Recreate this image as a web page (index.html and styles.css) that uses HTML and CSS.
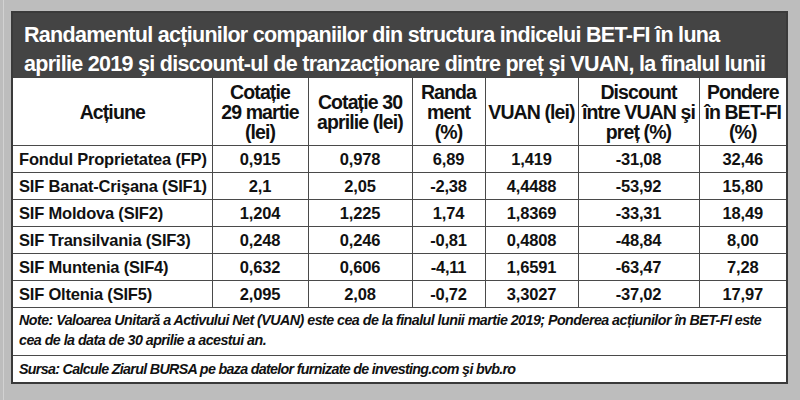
FILE: index.html
```html
<!DOCTYPE html>
<html lang="ro">
<head>
<meta charset="utf-8">
<link rel="stylesheet" href="styles.css">
</head>
<body>
<div class="frame">
  <div class="card">
    <div class="title">Randamentul acțiunilor companiilor din structura indicelui BET-FI în luna<br>aprilie 2019 şi discount-ul de tranzacționare dintre preț şi VUAN, la finalul lunii</div>
    <table class="data">
      <colgroup>
        <col class="c1"><col class="c2"><col class="c3"><col class="c4"><col class="c5"><col class="c6"><col class="c7">
      </colgroup>
      <thead>
        <tr>
          <th>Acțiune</th>
          <th>Cotație<br>29 martie<br>(lei)</th>
          <th>Cotație 30<br>aprilie (lei)</th>
          <th>Randa<br>ment<br>(%)</th>
          <th>VUAN (lei)</th>
          <th>Discount<br>între VUAN şi<br>preț (%)</th>
          <th>Pondere<br>în BET-FI<br>(%)</th>
        </tr>
      </thead>
      <tbody>
        <tr><td>Fondul Proprietatea (FP)</td><td>0,915</td><td>0,978</td><td>6,89</td><td>1,419</td><td>-31,08</td><td>32,46</td></tr>
        <tr><td>SIF Banat-Crişana (SIF1)</td><td>2,1</td><td>2,05</td><td>-2,38</td><td>4,4488</td><td>-53,92</td><td>15,80</td></tr>
        <tr><td>SIF Moldova (SIF2)</td><td>1,204</td><td>1,225</td><td>1,74</td><td>1,8369</td><td>-33,31</td><td>18,49</td></tr>
        <tr><td>SIF Transilvania (SIF3)</td><td>0,248</td><td>0,246</td><td>-0,81</td><td>0,4808</td><td>-48,84</td><td>8,00</td></tr>
        <tr><td>SIF Muntenia (SIF4)</td><td>0,632</td><td>0,606</td><td>-4,11</td><td>1,6591</td><td>-63,47</td><td>7,28</td></tr>
        <tr><td>SIF Oltenia (SIF5)</td><td>2,095</td><td>2,08</td><td>-0,72</td><td>3,3027</td><td>-37,02</td><td>17,97</td></tr>
        <tr class="note"><td colspan="7">Note: Valoarea Unitară a Activului Net (VUAN) este cea de la finalul lunii martie 2019; Ponderea acțiunilor în BET-FI este<br>cea de la data de 30 aprilie a acestui an.</td></tr>
        <tr class="src"><td colspan="7">Sursa: Calcule Ziarul BURSA pe baza datelor furnizate de investing.com şi bvb.ro</td></tr>
      </tbody>
    </table>
  </div>
</div>
</body>
</html>
```
FILE: styles.css
```css
html, body {
  margin: 0;
  padding: 0;
}
body {
  width: 800px;
  height: 400px;
  background: #bdbdbd;
  font-family: "Liberation Sans Narrow", "Liberation Sans", Arial, sans-serif;
  font-weight: bold;
  color: #111;
  overflow: hidden;
}
.frame {
  padding: 11px 12px 0 7px;
  border-left: 1px solid #d2d2d2;
  margin-left: 3px;
  height: 400px;
  box-sizing: border-box;
}
.card {
  width: 777px;
  background: #fff;
  border: 2px solid #3a3a3a;
  box-sizing: border-box;
}
.title {
  background: #444444;
  color: #fff;
  font-size: 21.5px;
  letter-spacing: -0.7px;
  line-height: 29px;
  padding: 8px 4px 0 11px;
  height: 65px;
  box-sizing: border-box;
  white-space: nowrap;
}
.data {
  width: 100%;
  border-collapse: collapse;
  table-layout: fixed;
}
.c1 { width: 199px; }
.c2 { width: 96px; }
.c3 { width: 104px; }
.c4 { width: 73px; }
.c5 { width: 93px; }
.c6 { width: 121px; }
.c7 { width: 87px; }
.data th, .data td {
  border: 1.5px solid #4a4a4a;
  padding: 0;
}
.data tr > :first-child { border-left: none; }
.data tr > :last-child { border-right: none; }
.data tr:last-child td { border-bottom: none; }
.data thead th { border-top: none; }
.data th {
  font-size: 19.5px;
  letter-spacing: -0.9px;
  line-height: 20px;
  height: 67px;
  text-align: center;
  vertical-align: middle;
  white-space: nowrap;
}
.data td {
  font-size: 16.5px;
  letter-spacing: -0.2px;
  line-height: 18px;
  height: 26px;
  text-align: center;
}
.data td:first-child {
  text-align: left;
  padding-left: 6px;
}
.data tr.note td,
.data tr.src td {
  font-style: italic;
  font-size: 14.3px;
  letter-spacing: -0.55px;
  text-align: left;
  padding-left: 6px;
  line-height: 20px;
  white-space: nowrap;
}
.data tr.note td {
  height: 45px;
  padding-top: 2px;
  vertical-align: top;
}
.data tr.src td {
  height: 26px;
  letter-spacing: -0.7px;
}
```
